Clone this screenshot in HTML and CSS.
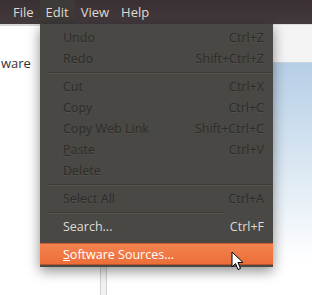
FILE: index.html
```html
<!DOCTYPE html>
<html lang="en">
<head>
    <meta charset="UTF-8">
    <title>Edit menu</title>
    <link rel="stylesheet" href="styles.css">
</head>
<body>
    <div class="panel">
        <span class="panel-item">File</span>
        <span class="panel-item active">Edit</span>
        <span class="panel-item">View</span>
        <span class="panel-item">Help</span>
    </div>

    <div class="workspace">
        <div class="sidebar"><p class="sidebar-label">ware</p></div>
        <div class="track"></div>
        <div class="content"></div>
        <div class="preview">
            <div class="preview-head"></div>
            <div class="preview-body"></div>
        </div>

        <!-- Dropdown menu over the window -->
        <div class="menu">
            <div class="menu-item disabled"><span>Undo</span><span class="accel">Ctrl+Z</span></div>
            <div class="menu-item disabled"><span>Redo</span><span class="accel">Shift+Ctrl+Z</span></div>
            <div class="separator"></div>
            <div class="menu-item disabled"><span>Cut</span><span class="accel">Ctrl+X</span></div>
            <div class="menu-item disabled"><span>Copy</span><span class="accel">Ctrl+C</span></div>
            <div class="menu-item disabled"><span>Copy Web Link</span><span class="accel">Shift+Ctrl+C</span></div>
            <div class="menu-item disabled"><span><u>P</u>aste</span><span class="accel">Ctrl+V</span></div>
            <div class="menu-item disabled"><span>Delete</span></div>
            <div class="separator"></div>
            <div class="menu-item disabled"><span>Select All</span><span class="accel">Ctrl+A</span></div>
            <div class="separator short"></div>
            <div class="menu-item"><span>Search...</span><span class="accel">Ctrl+F</span></div>
            <div class="menu-item selected"><span><u>S</u>oftware Sources...</span></div>
        </div>

        <svg class="cursor" width="14" height="21" viewBox="0 0 14 21">
            <path d="M1 1 L1 16 L4.5 12.5 L7 18.5 L9.5 17.5 L7 11.5 L12 11.5 Z" fill="#fff" stroke="#000" stroke-width="1" stroke-linejoin="round"/>
        </svg>
    </div>
</body>
</html>
```

FILE: styles.css
```css
body {
    margin: 0;
    width: 312px;
    height: 295px;
    overflow: hidden;
    background: #fff;
    font-family: 'Open Sans', 'DejaVu Sans', sans-serif;
}
.panel {
    height: 24px;
    display: flex;
    align-items: stretch;
    padding-left: 7px;
    background: linear-gradient(#3a3034, #433a3d);
}
.panel-item {
    display: flex;
    align-items: center;
    padding: 0 6px;
    color: #dfdbd2;
    font-size: 13px;
}
.panel-item.active {
    background: #3d3a38;
}
.workspace {
    position: relative;
    display: flex;
    height: 271px;
}
.sidebar {
    width: 100px;
    border-top: 2px solid #d6d6d6;
    border-right: 1px solid #d0d0d0;
    background: #fff;
}
.sidebar-label {
    margin: 28px 0 0 1px;
    font-size: 13px;
    color: #333;
}
.track {
    width: 5px;
    border-right: 1px solid #d0d0d0;
    background: #f2f2f2;
}
.content {
    width: 166px;
    background: #fff;
}
.preview {
    flex: 1;
    display: flex;
    flex-direction: column;
}
.preview-head {
    height: 37px;
    border-top: 1px solid #dcdcdc;
    border-bottom: 1px solid #c8d4de;
    background: #f4f4f4;
}
.preview-body {
    flex: 1;
    background: linear-gradient(#b6cee6, #dbe8f3 45%, #ffffff 85%);
}
.menu {
    position: absolute;
    left: 40px;
    top: 0;
    width: 233px;
    padding: 3px 0 2px;
    background: #494844;
    box-shadow: 0 4px 12px rgba(0, 0, 0, 0.45);
}
.menu-item {
    display: flex;
    justify-content: space-between;
    align-items: center;
    height: 21px;
    padding: 0 9px 0 23px;
    font-size: 12.5px;
    color: #dfdbd2;
}
.menu-item.disabled {
    color: #2d2c29;
    text-shadow: 0 1px 0 rgba(255, 255, 255, 0.06);
}
.menu-item.selected {
    height: 20px;
    margin-top: 6px;
    border-top: 1px solid #c95e30;
    border-bottom: 1px solid #b8552b;
    background: linear-gradient(#f3834f, #ec6e39);
    color: #fff;
}
.separator {
    height: 1px;
    margin: 3px 0 2px 8px;
    background: #3a3935;
    border-bottom: 1px solid #55544f;
}
.separator.short {
    margin-right: 48px;
}
.cursor {
    position: absolute;
    left: 231px;
    top: 227px;
}
```
